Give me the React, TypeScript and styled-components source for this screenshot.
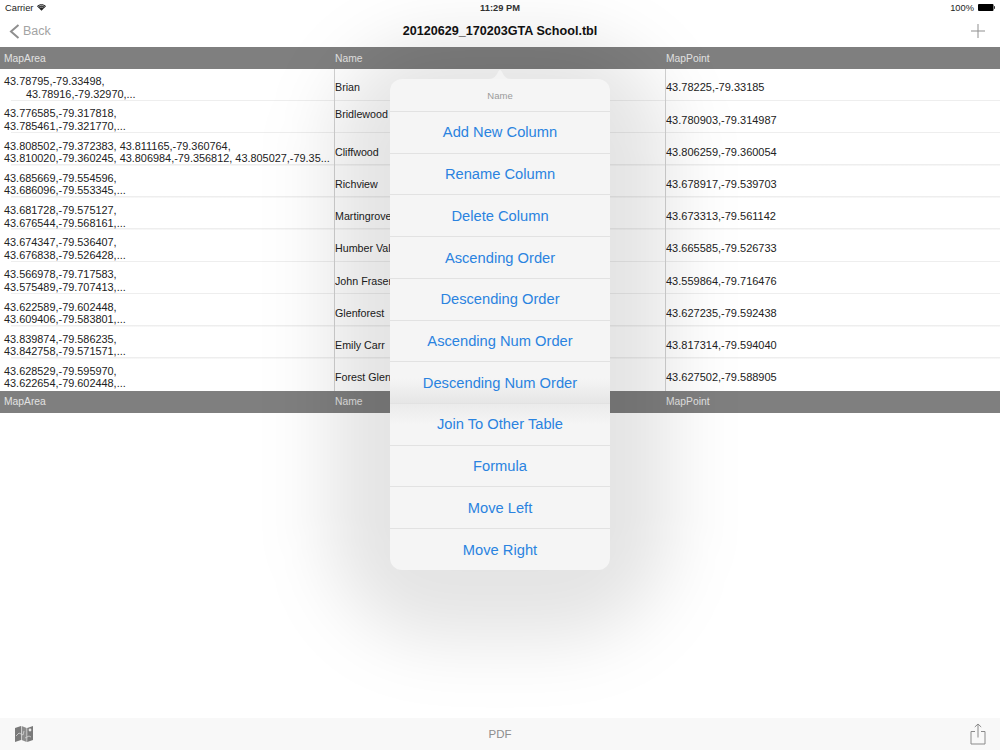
import * as React from "react";
import styled, { createGlobalStyle } from "styled-components";

const GlobalStyle = createGlobalStyle`
  html, body {
    margin: 0;
    padding: 0;
    background: #fff;
    font-family: "Liberation Sans", Arial, sans-serif;
  }
`;

interface IRow {
  area: string[];
  name: string;
  point: string;
  indent?: boolean;
  nameLift?: boolean;
}

const rows: IRow[] = [
  { area: ["43.78795,-79.33498,", "43.78916,-79.32970,..."], name: "Brian", point: "43.78225,-79.33185", indent: true },
  { area: ["43.776585,-79.317818,", "43.785461,-79.321770,..."], name: "Bridlewood", point: "43.780903,-79.314987", nameLift: true },
  {
    area: ["43.808502,-79.372383, 43.811165,-79.360764,", "43.810020,-79.360245, 43.806984,-79.356812, 43.805027,-79.35..."],
    name: "Cliffwood",
    point: "43.806259,-79.360054",
  },
  { area: ["43.685669,-79.554596,", "43.686096,-79.553345,..."], name: "Richview", point: "43.678917,-79.539703" },
  { area: ["43.681728,-79.575127,", "43.676544,-79.568161,..."], name: "Martingrove", point: "43.673313,-79.561142" },
  { area: ["43.674347,-79.536407,", "43.676838,-79.526428,..."], name: "Humber Valley", point: "43.665585,-79.526733" },
  { area: ["43.566978,-79.717583,", "43.575489,-79.707413,..."], name: "John Fraser", point: "43.559864,-79.716476" },
  { area: ["43.622589,-79.602448,", "43.609406,-79.583801,..."], name: "Glenforest", point: "43.627235,-79.592438" },
  { area: ["43.839874,-79.586235,", "43.842758,-79.571571,..."], name: "Emily Carr", point: "43.817314,-79.594040" },
  { area: ["43.628529,-79.595970,", "43.622654,-79.602448,..."], name: "Forest Glen", point: "43.627502,-79.588905" },
];

const menuItems = [
  "Add New Column",
  "Rename Column",
  "Delete Column",
  "Ascending Order",
  "Descending Order",
  "Ascending Num Order",
  "Descending Num Order",
  "Join To Other Table",
  "Formula",
  "Move Left",
  "Move Right",
];

const WifiIcon = () => (
  <svg width="9" height="7" viewBox="0 0 11 8">
    <path d="M5.5 8 L0 2.4 C3 -0.6 8 -0.6 11 2.4 Z" fill="#222" />
    <path d="M1.6 2.9 C3.9 0.9 7.1 0.9 9.4 2.9" fill="none" stroke="#fff" strokeWidth="0.7" />
    <path d="M3.1 4.5 C4.5 3.3 6.5 3.3 7.9 4.5" fill="none" stroke="#fff" strokeWidth="0.7" />
  </svg>
);

const BatteryIcon = () => (
  <svg width="17" height="7" viewBox="0 0 17 7">
    <rect x="0" y="0" width="15.5" height="7" rx="1" fill="#000" />
    <rect x="16" y="2.2" width="1" height="2.6" fill="#333" />
  </svg>
);

const MapIcon = () => (
  <svg width="20" height="18" viewBox="0 0 20 18">
    <path d="M1 3 L7 1 L7 15 L1 17 Z" fill="#7a7a7a" />
    <path d="M7.6 1 L12.6 3 L12.6 17 L7.6 15 Z" fill="#8c8c8c" />
    <path d="M13.2 3 L19 1 L19 15 L13.2 17 Z" fill="#7a7a7a" />
    <path d="M2 11 L5 8 L9 10 L10 6 M11 13 L15 11 L17 12" fill="none" stroke="#d5d5d5" strokeWidth="0.8" />
    <circle cx="16" cy="5" r="1.4" fill="#e8e8e8" />
  </svg>
);

const ShareIcon = () => (
  <svg width="16" height="22" viewBox="0 0 16 22" fill="none" stroke="#8a8a8a" strokeWidth="1">
    <path d="M5 8.5 H1 V21 H15 V8.5 H11" />
    <path d="M8 14.5 V1 M4.8 4 L8 1 L11.2 4" />
  </svg>
);

function tintFor(item: string): "bottom" | "top" | undefined {
  if (item === "Descending Num Order") return "bottom";
  if (item === "Join To Other Table") return "top";
  return undefined;
}

function App() {
  return (
    <>
      <GlobalStyle />
      <Page>
        <StatusBar>
          <StatusSide>
            Carrier <WifiIcon />
          </StatusSide>
          <StatusTime>11:29 PM</StatusTime>
          <StatusSide $right>
            100% <BatteryIcon />
          </StatusSide>
        </StatusBar>
        <NavBar>
          <BackButton>
            <svg width="11" height="15" viewBox="0 0 11 15" fill="none" stroke="#8f8f8f" strokeWidth="2">
              <path d="M9.5 1 L2 7.5 L9.5 14" />
            </svg>
            Back
          </BackButton>
          <Title>20120629_170203GTA School.tbl</Title>
          <PlusButton>
            <svg width="14" height="14" viewBox="0 0 14 14" stroke="#8f8f8f" strokeWidth="1">
              <path d="M7 0 V14 M0 7 H14" />
            </svg>
          </PlusButton>
        </NavBar>
        <HeaderRow>
          <HeaderCell>MapArea</HeaderCell>
          <HeaderCell>Name</HeaderCell>
          <HeaderCell>MapPoint</HeaderCell>
        </HeaderRow>
        {rows.map((row, i) => (
          <DataRow key={row.name} $last={i === rows.length - 1}>
            <AreaCell>
              <AreaLine>{row.area[0]}</AreaLine>
              <AreaLine $indent={row.indent}>{row.area[1]}</AreaLine>
            </AreaCell>
            <NameCell $lift={row.nameLift}>{row.name}</NameCell>
            <PointCell>{row.point}</PointCell>
          </DataRow>
        ))}
        <HeaderRow>
          <HeaderCell>MapArea</HeaderCell>
          <HeaderCell>Name</HeaderCell>
          <HeaderCell>MapPoint</HeaderCell>
        </HeaderRow>
        <Spacer />
        <Toolbar>
          <MapIcon />
          <PdfLabel>PDF</PdfLabel>
          <ShareIcon />
        </Toolbar>
        <Shade />
        <Popover>
          <PopoverTitle>Name</PopoverTitle>
          {menuItems.map((item) => (
            <MenuItem key={item} $tint={tintFor(item)}>
              {item}
            </MenuItem>
          ))}
        </Popover>
      </Page>
    </>
  );
}

export default App;

// style
const Page = styled.div`
  position: relative;
  width: 1000px;
  height: 750px;
  overflow: hidden;
  display: flex;
  flex-direction: column;
  background: #fff;
`;

const StatusBar = styled.div`
  height: 15px;
  padding: 0 5px;
  display: flex;
  align-items: center;
  justify-content: space-between;
  font-size: 9.3px;
  color: #222;
`;

const StatusSide = styled.div<{ $right?: boolean }>`
  width: 120px;
  display: flex;
  align-items: center;
  gap: 4px;
  justify-content: ${(p) => (p.$right ? "flex-end" : "flex-start")};
`;

const StatusTime = styled.div`
  font-size: 9.3px;
  font-weight: bold;
  color: #333;
`;

const NavBar = styled.div`
  height: 32px;
  padding: 0 12px;
  display: grid;
  grid-template-columns: 1fr auto 1fr;
  align-items: center;
`;

const BackButton = styled.div`
  margin-left: -3px;
  display: flex;
  align-items: center;
  gap: 3px;
  font-size: 12.5px;
  color: #a3a3a3;
`;

const Title = styled.div`
  font-size: 12.6px;
  font-weight: bold;
  color: #111;
`;

const PlusButton = styled.div`
  margin-right: 3px;
  display: flex;
  justify-content: flex-end;
`;

const HeaderRow = styled.div`
  height: 22px;
  flex: none;
  display: grid;
  grid-template-columns: 334px 331px 335px;
  background: #7f7f7f;
`;

const HeaderCell = styled.div`
  padding-left: 4px;
  display: flex;
  align-items: center;
  font-size: 10.3px;
  color: #e2e2e2;

  & + & {
    padding-left: 1px;
  }
`;

const DataRow = styled.div<{ $last?: boolean }>`
  height: 32.2px;
  flex: none;
  box-sizing: border-box;
  display: grid;
  grid-template-columns: 334px 331px 335px;
  background: ${(p) => (p.$last ? "none" : "linear-gradient(#eeeeee, #eeeeee) no-repeat 11px 100% / 989px 1.5px")};
`;

const AreaCell = styled.div`
  padding: 6.3px 0 0 4px;
  font-size: 10.9px;
  line-height: 12.5px;
  color: #222;
  white-space: nowrap;
  overflow: hidden;
`;

const AreaLine = styled.div<{ $indent?: boolean }>`
  padding-left: ${(p) => (p.$indent ? "22px" : "0")};
`;

const NameCell = styled.div<{ $lift?: boolean }>`
  padding: ${(p) => (p.$lift ? "0 0 7px 0" : "4.6px 0 0 0")};
  border-left: 1px solid #d2d2d2;
  display: flex;
  align-items: center;
  font-size: 10.7px;
  color: #222;
  white-space: nowrap;
  overflow: hidden;
`;

const PointCell = styled(NameCell)`
  font-size: 11px;
`;

const Spacer = styled.div`
  flex: 1;
`;

const Toolbar = styled.div`
  height: 32px;
  flex: none;
  padding: 0 14px;
  display: grid;
  grid-template-columns: 1fr auto 1fr;
  align-items: center;
  background: #f8f8f8;

  & > svg:last-child {
    justify-self: end;
  }
`;

const PdfLabel = styled.div`
  font-size: 11.5px;
  color: #8e8e8e;
`;

// soft drop shadow of the popover, laid over the page
const Shade = styled.div`
  position: absolute;
  left: 330px;
  top: 40px;
  width: 340px;
  height: 600px;
  border-radius: 110px;
  background: rgba(0, 0, 0, 0.105);
  filter: blur(35px);
  pointer-events: none;
`;

const Popover = styled.div`
  position: absolute;
  left: 390px;
  top: 79px;
  width: 220px;
  height: 491px;
  border-radius: 12px;
  background: #f5f5f5;

  &::before {
    content: "";
    position: absolute;
    left: 99px;
    top: -10px;
    width: 22px;
    height: 10px;
    background: #f3f3f3;
    clip-path: path("M0 10 C5 10 7 7 9 3 Q11 -1 13 3 C15 7 17 10 22 10 Z");
  }
`;

const PopoverTitle = styled.div`
  height: 32px;
  display: flex;
  align-items: center;
  justify-content: center;
  font-size: 9.5px;
  color: #9a9a9a;
`;

const MenuItem = styled.div<{ $tint?: "bottom" | "top" }>`
  height: 41.73px;
  box-sizing: border-box;
  border-top: 1px solid #e2e2e2;
  display: flex;
  align-items: center;
  justify-content: center;
  font-size: 14.7px;
  color: #2a83e0;
  background: ${(p) =>
    p.$tint === "bottom"
      ? "linear-gradient(#f5f5f5 40%, #e6e6e6)"
      : p.$tint === "top"
        ? "linear-gradient(#ebebeb, #f5f5f5 50%)"
        : "transparent"};
`;
